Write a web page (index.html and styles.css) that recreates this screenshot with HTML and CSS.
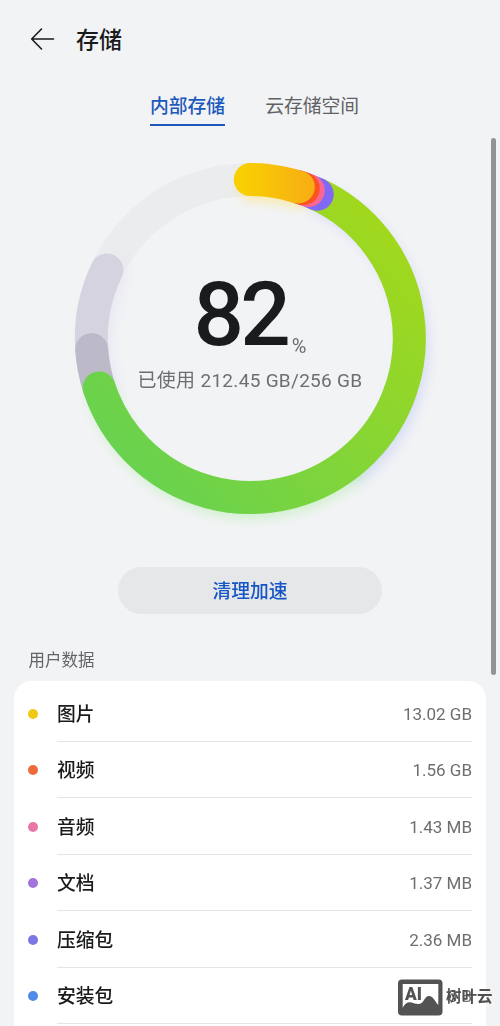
FILE: index.html
```html
<!DOCTYPE html>
<html lang="zh-CN">
<head>
<meta charset="utf-8">
<title>存储</title>
<link rel="stylesheet" href="styles.css">
</head>
<body>
<div class="screen">
  <header class="header">
    <svg class="back" width="26" height="24" viewBox="0 0 26 24" fill="none" stroke="#1a1b1d" stroke-width="1.6" stroke-linecap="round" stroke-linejoin="round"><path d="M23.500 12H2M11.500 2 1.700 12 11.500 22"/></svg>
    <h1 class="title">存储</h1>
  </header>
  <nav class="tabs">
    <span class="tab tab-active">内部存储</span>
    <span class="tab">云存储空间</span>
  </nav>
  <section class="usage">
    <svg class="ring" width="390" height="390" viewBox="-195.300 -195.500 390 390" fill="none" stroke-width="33" stroke-linecap="round">
      <defs>
        <linearGradient id="green" gradientUnits="userSpaceOnUse" x1="110" y1="-130" x2="-140" y2="100"><stop offset="0" stop-color="#a0d81e"/><stop offset="1" stop-color="#69d24e"/></linearGradient>
        <linearGradient id="yellow" gradientUnits="userSpaceOnUse" x1="-10" y1="0" x2="64" y2="0"><stop offset="0" stop-color="#f8d002"/><stop offset="1" stop-color="#f8ad14"/></linearGradient>
        <filter id="blur" filterUnits="userSpaceOnUse" x="-195" y="-195" width="390" height="390"><feGaussianBlur stdDeviation="6"/></filter>
      </defs>
      <circle r="159" stroke="#ebecee"/>
      <g filter="url(#blur)" stroke-width="27">
        <path d="M-151.100 49.400A159 159 0 0 1 -143.500 -68.500" stroke="#dcdaf0" opacity=".4" transform="translate(7 4)"/>
        <path d="M67 -144.200A159 159 0 0 1 100 124" stroke="#c3cdf5" opacity=".6" transform="translate(5 7)"/>
        <path d="M100 124A159 159 0 0 1 -151.100 49.400" stroke="#a9efa0" opacity=".5" transform="translate(2 7)"/>
        <path d="M0 -159A159 159 0 0 1 48.600 -151.400" stroke="#ffe36b" opacity=".6" transform="translate(2 7)"/>
      </g>
      <path d="M-158.600 11.100A159 159 0 0 1 -143.500 -68.500" stroke="#d5d3e0"/>
      <path d="M-151.100 49.400A159 159 0 0 1 -158.600 11.100" stroke="#bcb9c8"/>
      <path d="M67 -144.200A159 159 0 1 1 -151.100 49.400" stroke="url(#green)"/>
      <path d="M48.600 -151.400A159 159 0 0 1 67 -144.200" stroke="#806af5"/>
      <path d="M48.600 -151.400A159 159 0 0 1 58 -148" stroke="#fc6695"/>
      <path d="M48.600 -151.400A159 159 0 0 1 53 -149.900" stroke="#fb5420"/>
      <path d="M0 -159A159 159 0 0 1 48 -151.600" stroke="url(#yellow)"/>
    </svg>
    <div class="summary">
      <div class="percent"><span class="percent-value">82</span><span class="percent-sign">%</span></div>
      <div class="used">已使用 212.45 GB/256 GB</div>
    </div>
  </section>
  <button class="clean">清理加速</button>
  <h2 class="section-title">用户数据</h2>
  <main class="card">
    <div class="row"><i class="dot yellow"></i><div class="entry"><span class="name">图片</span><span class="size">13.02 GB</span></div></div>
    <div class="row"><i class="dot orange"></i><div class="entry"><span class="name">视频</span><span class="size">1.56 GB</span></div></div>
    <div class="row"><i class="dot pink"></i><div class="entry"><span class="name">音频</span><span class="size">1.43 MB</span></div></div>
    <div class="row"><i class="dot purple"></i><div class="entry"><span class="name">文档</span><span class="size">1.37 MB</span></div></div>
    <div class="row"><i class="dot indigo"></i><div class="entry"><span class="name">压缩包</span><span class="size">2.36 MB</span></div></div>
    <div class="row"><i class="dot blue"></i><div class="entry"><span class="name">安装包</span><span class="size">0 B</span></div></div>
  </main>
  <div class="scrollbar"></div>
  <div class="watermark">
    <svg width="45" height="37" viewBox="0 0 45 37"><rect y=".5" width="44.500" height="36" rx="4" fill="#535353"/><path d="M4.700 5H40.300V26C37 23 35.500 17 31 17C26 17 26.500 24.500 21 25C17 25.500 14 22.500 10 23.500Q6.500 24.500 4.700 29Z" fill="#fff"/><text class="mark" x="7" y="21" textLength="17" lengthAdjust="spacingAndGlyphs">AI</text></svg>
    <span>树叶云</span>
  </div>
</div>
</body>
</html>
```
FILE: styles.css
```css
* { box-sizing: border-box; }
body { margin: 0; background: #f2f3f5; color: #1a1b1d; font-family: Roboto, "Noto Sans CJK SC", sans-serif; }
.screen { position: relative; width: 500px; height: 1026px; overflow: hidden; display: flex; flex-direction: column; }
.header { height: 78px; flex: none; padding-left: 30px; display: flex; align-items: center; gap: 20px; }
.title { margin: 0; padding-top: 3px; font-size: 23px; line-height: 34px; font-weight: 500; }
.tabs { height: 48px; flex: none; padding: 12px 0 0 150px; display: flex; gap: 40px; align-items: flex-start; }
.tab { height: 35.500px; font-size: 18.8px; line-height: 34px; color: #5f6164; }
.tab-active { color: #1d59bd; font-weight: 500; border-bottom: 2px solid #1d59bd; }
.usage { height: 441px; flex: none; display: grid; justify-items: center; padding-top: 17px; }
.ring { grid-area: 1 / 1; }
.summary { grid-area: 1 / 1; display: flex; flex-direction: column; align-items: center; padding-top: 126px; }
.percent { display: flex; align-items: flex-end; height: 92px; }
.percent-value { font-size: 89px; line-height: 92px; font-weight: 500; letter-spacing: -4px; }
.percent-sign { font-size: 20px; line-height: 24px; color: #6c6e70; padding: 0 0 3px 5px; }
.used { margin-top: 6px; font-size: 19px; line-height: 28px; color: #6c6e70; letter-spacing: .3px; white-space: nowrap; }
.clean { width: 264px; height: 47px; flex: none; align-self: center; border: 0; padding: 3px 0 0; border-radius: 24px; background: #e6e7e9; color: #1555c6; font: 500 18.8px/44px Roboto, "Noto Sans CJK SC", sans-serif; }
.section-title { margin: 35px 0 8px 28.500px; font-size: 16.5px; line-height: 24px; font-weight: 400; color: #626466; }
.card { width: 472px; height: 380px; flex: none; margin: -0.500px 0 0 14px; padding: 4.900px 14px 0; background: #fff; border-radius: 18px; }
.row { height: 56.500px; display: flex; align-items: center; gap: 19px; }
.dot { width: 10px; height: 10px; border-radius: 50%; }
.entry { flex: 1; height: 100%; border-bottom: 1px solid #e4e5e6; display: flex; align-items: center; justify-content: space-between; font-size: 18.8px; line-height: 26px; font-weight: 500; }
.name { padding-top: 3px; }
.size { padding-top: 1px; font-size: 17px; font-weight: 400; color: #6c6e70; }
.yellow { background: #f2c814; }
.orange { background: #ed6a39; }
.pink { background: #ea76a7; }
.purple { background: #a374db; }
.indigo { background: #7c77e5; }
.blue { background: #4f8be8; }
.scrollbar { position: absolute; left: 491px; top: 138px; width: 5px; height: 537px; border-radius: 3px; background: #929396; }
.watermark { position: absolute; left: 398px; top: 978px; display: flex; align-items: center; gap: 3px; color: #505050; font-size: 15.5px; font-weight: 700; line-height: 38px; }
.mark { font: 900 19px Roboto, sans-serif; fill: #535353; }
```
